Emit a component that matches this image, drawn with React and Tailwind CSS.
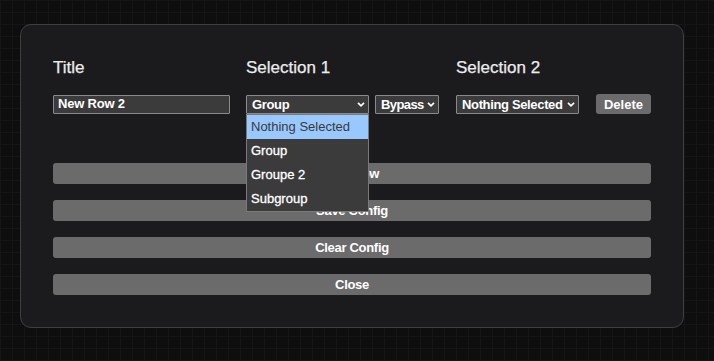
const Chevron = () => (
  <svg width="8" height="5" viewBox="0 0 8 5" className="shrink-0">
    <path d="M1 0.8 L4 3.8 L7 0.8" fill="none" stroke="#ffffff" strokeWidth="1.7" />
  </svg>
)

const FakeSelect = ({ value, width, tight }) => (
  <div
    className={`flex items-center justify-between h-[19px] border border-[#8a8a8a] bg-[#3b3b3b] pl-[5px] pr-[3px] text-[13px] font-bold whitespace-nowrap text-white rounded-[1px] ${
      tight ? "tracking-[-0.6px]" : "tracking-[-0.35px]"
    } ${width}`}
  >
    <span className="leading-none">{value}</span>
    <Chevron />
  </div>
)

const options = ["Nothing Selected", "Group", "Groupe 2", "Subgroup"]

const App = () => {
  return (
    <div
      className="w-[714px] h-[361px] overflow-hidden bg-[#0e0e0e] bg-[linear-gradient(to_right,#151515_1px,transparent_1px),linear-gradient(to_bottom,#151515_1px,transparent_1px)] bg-[size:12px_12px] pl-[20px] pt-[24px]"
      style={{ fontFamily: '"Liberation Sans", Arial, sans-serif' }}
    >
      <div className="w-[664px] h-[304px] rounded-[11px] border border-[#3e3e40] bg-[#1b1b1d] pl-[32px] pr-[31px] pt-[33px]">
        <div className="grid grid-cols-[193px_210px_140px_55px] text-[17px] leading-[19px] text-[#ececec] [-webkit-text-stroke:0.25px_#ececec]">
          <div>Title</div>
          <div>Selection 1</div>
          <div>Selection 2</div>
          <div></div>
        </div>

        <div className="grid grid-cols-[193px_210px_140px_55px] mt-[17px] items-center h-[20px]">
          <div className="h-[19px] w-[177px] border border-[#8a8a8a] bg-[#3b3b3b] pl-[4px] flex items-center text-[13px] font-bold tracking-[-0.2px] text-white rounded-[1px]">
            New Row 2
          </div>
          <div className="relative flex gap-[6px]">
            <FakeSelect value="Group" width="w-[123px]" />
            <FakeSelect value="Bypass" width="w-[64px]" tight />
            <div className="absolute left-0 top-[19px] w-[123px] border border-[#7a7a7a] bg-[#3b3b3b] z-10">
              {options.map((o, i) => (
                <div
                  key={o}
                  className={`h-[24px] flex items-center pl-[4px] text-[13px] ${
                    i === 0
                      ? "bg-[#99c8ff] text-[#3a3a3a]"
                      : "text-white [-webkit-text-stroke:0.3px_#ffffff]"
                  }`}
                >
                  {o}
                </div>
              ))}
            </div>
          </div>
          <div className="mt-[1px]">
            <FakeSelect value="Nothing Selected" width="w-[123px]" />
          </div>
          <button className="h-[20px] w-[55px] rounded-[3px] bg-[#6b6b6b] text-[13px] font-bold text-white leading-none">
            Delete
          </button>
        </div>

        <div className="flex flex-col gap-[16px] mt-[49px] w-[598px]">
          {["Add Row", "Save Config", "Clear Config", "Close"].map(label => (
            <button
              key={label}
              className="h-[21px] w-full rounded-[3px] bg-[#6b6b6b] text-[13px] font-bold tracking-[-0.3px] text-white leading-none"
            >
              {label}
            </button>
          ))}
        </div>
      </div>
    </div>
  )
}

export default App
